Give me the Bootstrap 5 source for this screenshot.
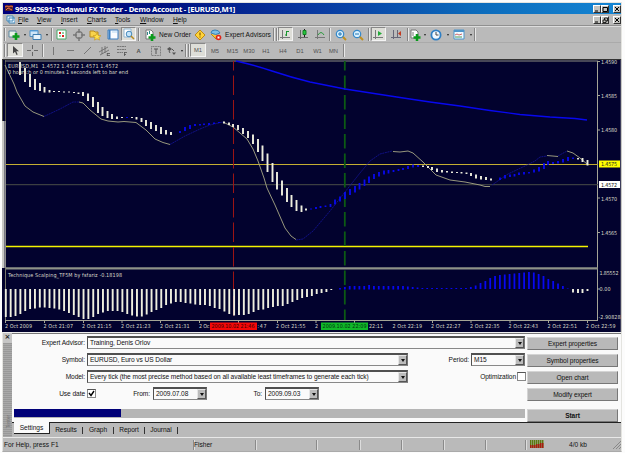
<!DOCTYPE html>
<html lang="en"><head><meta charset="utf-8"><title>Tadawul FX Trader</title>
<link href="https://cdn.jsdelivr.net/npm/bootstrap@5.3.0/dist/css/bootstrap.min.css" rel="stylesheet">
<style>
body{width:625px;height:453px;overflow:hidden;background:#fcfcfc;font:6.6px/8px "Liberation Sans",Arial,sans-serif;color:#111}
.win{width:620px;height:450px;margin:2px 0 0 2px;background:#bababa;border:1px solid #e4e4e0;border-bottom-color:#aaa}
.titlebar{height:11px;background:linear-gradient(90deg,#00007c 0,#00107f 25%,#0838a0 50%,#0b6abb 76%,#1485d3 100%);color:#fff;font-weight:bold}
.titletext{letter-spacing:-.21px;font-family:"Noto Sans",sans-serif;font-size:7.7px;margin-left:1px}
.wbtn{width:8px;height:8px;background:#c3c3bf;border:1px solid #fff;border-right-color:#333;border-bottom-color:#333}
.wbtn svg,.t svg,.titlebar svg{display:block}
.menubar{height:12px;border-bottom:1px solid #909090}
.menubar u{text-underline-offset:.5px;text-decoration-thickness:.6px}
.tb{height:16px;border-top:1px solid #ddd}
.tb.second{height:17px;border-top-color:#aaa;color:#505050;font-size:5.8px}
.t{flex:none;height:15px;display:flex;align-items:center;justify-content:center;white-space:nowrap}
.on{height:14px;background:#deded8;border:1px solid #888;border-right-color:#f4f4f4;border-bottom-color:#f4f4f4}
.w3{width:3px}.w4{width:4px}.w5{width:5px}.w6{width:6px}.w7{width:7px}.w13{width:13px}.w14{width:14px}.w15{width:15px}.w16{width:16px}.w17{width:17px}.w18{width:18px}.w20{width:20px}.w21{width:21px}.w34{width:34px}.w48{width:48px}
.m19{width:19px}.m24{width:24px}.m26{width:26px}.m28{width:28px}.m25{width:25px}.m33{width:33px}
.vsep::before{content:"";width:2px;height:13px;background:#858585;border-right:1px solid #e8e8e8}
.caret::before{content:"";border:1.7px solid transparent;border-top:2.2px solid #222;border-bottom:0}
.chart{display:block;margin-left:-1px}
.tester{height:105px;background:#bababa;border-top:1px solid #eee;letter-spacing:-.07px}
.strip{width:9px;background:repeating-linear-gradient(0deg,#a9a9a9 0 1px,#989898 1px 2px);color:#777}
.strip .x{height:10px;width:9px;background:#c5c5c5;font:bold 7px/9px "DejaVu Sans",sans-serif;color:#222;text-align:center}
.strip .v{font-size:5px;writing-mode:vertical-rl;transform:rotate(180deg);margin:72px 0 0 2px;line-height:6px;white-space:nowrap}
.pane{height:89px;background:#fafafa;border-top:1px solid #777}
.frow{height:17px}
.lab{width:73px;text-align:right;margin-right:2px}
.sel{height:13px;border:1px solid #505050;border-top-width:2px;border-right-color:#777;border-bottom-color:#888;background:#fafafa;padding-left:2px;white-space:nowrap}
.dd{width:9px;height:10px;background:#bcbcbc;border:1px solid #e6e6e6;border-right-color:#555;border-bottom-color:#555}
.dd::before{content:"";border:2.5px solid transparent;border-top:3px solid #111;border-bottom:0}
.s437{width:438px}.s321{width:321px}.s54{width:54px}
.chk{width:9px;height:9px;border:1px solid #888;border-top-color:#555;background:#fff}
.prog{height:9px;width:511px;margin:7px 0 0 2px;background:#b5b5b5}
.prog div{width:107px;height:8px;background:#000078}
.btns{width:91px;padding-top:3px;margin-right:3px}
.b{height:13px;margin-bottom:4px;background:#b9b9b9;border:1px solid #d4d4d4;border-right-color:#777;border-bottom-color:#777}
.b.start{margin-top:8px;margin-bottom:0}
.period{width:63px;text-align:right;padding-right:2px}.optim{width:109px;text-align:right;padding-right:1px}.from{width:57px;text-align:right;padding-right:3px}.to{width:58px;text-align:right;padding-right:3px}
.tabs{height:15px;border-top:1px solid #222;letter-spacing:-.04px}
.tabs .act{background:#fafafa;width:36px;height:12px;margin-top:-1px;margin-left:2px;border-right:1px solid #222;border-bottom:1px solid #222}
.bar1{width:1px;height:7px;background:#333}
.tab32,.tab30{width:32px;text-align:center}.tab30{width:30px}
.statusbar{height:14px;border-top:1px solid #e8e8e8;padding-left:1px}
.kb{margin-left:23px}
.c190{width:190px}.c63{width:62px}.c61{width:61px}.c43{width:43px}.c42{width:42px}.c40{width:40px}
.cell{height:10px;border-right:1px solid #8a8a8a;box-shadow:1px 0 #ddd}
.tx{font-family:"DejaVu Sans Condensed","DejaVu Sans",sans-serif;font-size:5.4px;font-stretch:condensed;fill:#dadaca}
</style></head><body>
<div class="win d-flex flex-column">
<div class="titlebar d-flex align-items-center">
<svg width="11" height="9" viewBox="0 0 11 9"><path d="M2 1h8v6H2z" fill="#502028"/><path d="M2 3l2-1 2 1 2-1 2 1M3 6l2-2 4 2" stroke="#f07040" fill="none"/></svg>
<span class="titletext">999342691: Tadawul FX Trader - Demo Account - [EURUSD,M1]</span>
<div class="ms-auto d-flex"><span class="wbtn"><svg width="7" height="7"><path d="M1 5h3" stroke="#000"/></svg></span><span class="wbtn me-1"><svg width="7" height="7"><path d="M1 1.500h4.500v4H1z" stroke="#000" fill="none"/></svg></span><span class="wbtn"><svg width="7" height="7"><path d="M1 1l4 4M5 1l-4 4" stroke="#000"/></svg></span></div></div>
<div class="menubar d-flex align-items-center">
<span class="t w15"><svg width="9" height="9"><path d="M1 1h6v5H1zM3 3h6v5H3z" fill="#eef8ff" stroke="#3f86b8"/></svg></span>
<span class="m19"><u>F</u>ile</span><span class="m24"><u>V</u>iew</span><span class="m26"><u>I</u>nsert</span><span class="m28"><u>C</u>harts</span><span class="m25"><u>T</u>ools</span><span class="m33"><u>W</u>indow</span><span><u>H</u>elp</span>
<div class="ms-auto d-flex"><span class="wbtn"><svg width="7" height="7"><path d="M1 5h3" stroke="#000"/></svg></span><span class="wbtn me-1"><svg width="7" height="7"><path d="M2.500 3V1h3v3H4M1 3h3v2.500H1z" stroke="#000" fill="none" stroke-width=".8"/></svg></span><span class="wbtn"><svg width="7" height="7"><path d="M1 1l4 4M5 1l-4 4" stroke="#000"/></svg></span></div></div>
<div class="tb d-flex">
<span class="t w4 vsep"></span>
<span class="t w14"><svg width="12" height="12"><path d="M1 2h7v6H1z" fill="#e9f3e9" stroke="#5d86a0"/><path d="M8 4v7M4.500 7.500h7" stroke="#0b9a1c" stroke-width="2.600"/></svg></span><span class="t w7 caret"></span>
<span class="t w15"><svg width="13" height="12"><path d="M1 1.500h8v6H1z" fill="#cfe6f8" stroke="#4d8cc0"/><path d="M4 5.500h8v5H4z" fill="#e6f3fc" stroke="#3d7cb0"/><path d="M1 2h8" stroke="#5aa4e0"/></svg></span><span class="t w7 caret"></span><span class="t w3 vsep"></span>
<span class="t w17"><svg width="11" height="11"><path d="M1 1h9v9H1z" fill="#fff" stroke="#49a868"/><path d="M3 3h2v2H3zM6 6h2v2H6z" fill="#e02020"/><path d="M6 3h2v2H6zM3 6h2v2H3z" fill="#8fd0a0"/></svg></span>
<span class="t w17"><svg width="12" height="12"><circle cx="6" cy="6" r="3.300" fill="none" stroke="#777" stroke-width="1.300"/><path d="M6 0v4M6 8v4M0 6h4M8 6h4" stroke="#777" stroke-width="1.500"/></svg></span>
<span class="t w17"><svg width="13" height="12"><path d="M1 2h4l1 1h3v5H1z" fill="#f8d34c" stroke="#b88a20"/><path d="M8 4l1.200 2.400 2.700.3-2 1.800.6 2.600L8 9.800l-2.500 1.300.6-2.600-2-1.800 2.700-.3z" fill="#ffe04a" stroke="#c89a20" stroke-width=".7"/></svg></span>
<span class="t w17"><svg width="12" height="11"><path d="M1 1h10v9H1z" fill="#fafcff" stroke="#3c7fc0"/><path d="M2.500 1v9" stroke="#3c7fc0" stroke-width="2"/><path d="M5 3h5" stroke="#b8d8f0"/></svg></span>
<span class="t on w15"><svg width="12" height="12"><path d="M1 1h7v8H1z" fill="#fff" stroke="#90b4d0"/><circle cx="6" cy="6" r="2.800" fill="#c4e4fa" stroke="#4588bb"/><path d="M8 8l3 3" stroke="#b88a20" stroke-width="1.500"/></svg></span><span class="t w5 vsep"></span>
<span class="t w17"><svg width="12" height="12"><path d="M2 1h5l2 2v7H2z" fill="#fff" stroke="#777"/><path d="M3.500 3v3M5.500 2v3" stroke="#388"/><path d="M8 5v7M4.500 8.500h7" stroke="#0b9a1c" stroke-width="2.600"/></svg></span><span class="t w34">New Order</span>
<span class="t w16"><svg width="12" height="12"><path d="M6 1l5 5-5 5-5-5z" fill="#ffd43a" stroke="#c08a10"/><path d="M6 3.500v3M6 7.500v1" stroke="#875800" stroke-width="1.200"/></svg></span>
<span class="t w16"><svg width="12" height="12"><path d="M1 5l5 5 4-4" fill="#f7c83a" stroke="#b98516"/><path d="M1 4q0-3 4-3t5 3q-4 3-9 0z" fill="#7bbfe8" stroke="#397eb3"/><circle cx="8.500" cy="8.500" r="2.800" fill="#e02418"/><path d="M7.500 7.500h2v2h-2z" fill="#fff"/></svg></span><span class="t w48">Expert Advisors</span><span class="t w3 vsep"></span><span class="t w3 vsep"></span>
<span class="t on w15"><svg width="11" height="11"><path d="M2.500 1v9M0 8.500h10" stroke="#777"/><path d="M6.500 2v5M5 6h2M6 2.500h3" stroke="#18962c"/></svg></span>
<span class="t w21"><svg width="11" height="11"><path d="M2.500 1v9M0 8.500h10" stroke="#666"/><path d="M6.500 0v8" stroke="#222"/><path d="M5 1.500h3v4H5z" fill="#26c83c" stroke="#128022"/></svg></span>
<span class="t w13"><svg width="11" height="11"><path d="M2.500 1v9M0 8.500h10" stroke="#777"/><path d="M3 6q3-5 6 0" stroke="#2a9a3c" fill="none"/></svg></span><span class="t w6 vsep"></span>
<span class="t w16"><svg width="12" height="12"><path d="M7 7l4 4" stroke="#c09020" stroke-width="2"/><circle cx="5" cy="5" r="3.700" fill="#d9f1ff" stroke="#3689ca" stroke-width="1.200"/><path d="M5 3v4M3 5h4" stroke="#2377b4"/></svg></span>
<span class="t w17"><svg width="12" height="12"><path d="M7 7l4 4" stroke="#c09020" stroke-width="2"/><circle cx="5" cy="5" r="3.700" fill="#d9f1ff" stroke="#3689ca" stroke-width="1.200"/><path d="M3 5h4" stroke="#2377b4"/></svg></span><span class="t w5 vsep"></span>
<span class="t on w15"><svg width="11" height="11"><path d="M2.500 1v9M0 8.500h10" stroke="#777"/><path d="M5 2l4 2.500L5 7z" fill="#24aa38"/></svg></span>
<span class="t w20"><svg width="11" height="11"><path d="M2.500 1v9M0 8.500h10M6.500 1v7" stroke="#667"/><path d="M10 2v5L7 4.500z" fill="#c33a20"/></svg></span><span class="t w3 vsep"></span>
<span class="t w13"><svg width="11" height="12"><path d="M1 1h5l2 2v6H1z" fill="#fff" stroke="#777"/><path d="M3 3v4" stroke="#777"/><path d="M7 5v7M3.500 8.500h7" stroke="#0b9a1c" stroke-width="2.500"/></svg></span><span class="t w5 caret"></span>
<span class="t w18"><svg width="12" height="12"><circle cx="6" cy="6" r="4.600" fill="#f0f8ff" stroke="#2f7fc4" stroke-width="1.800"/><path d="M6 3v3h2.500" stroke="#444" fill="none"/></svg></span><span class="t w5 caret"></span>
<span class="t w18"><svg width="12" height="11"><path d="M1 1h10v9H1z" fill="#f2faff" stroke="#4e95ca"/><path d="M1 2h10" stroke="#4e95ca" stroke-width="2"/><path d="M2 6l2-1 2 1 3-1" stroke="#c66" fill="none"/><path d="M2 8h7" stroke="#4a9a5a"/></svg></span><span class="t w5 caret"></span><span class="t w3 vsep"></span>
</div>
<div class="tb second d-flex">
<span class="t w4 vsep"></span>
<span class="t on w16"><svg width="10" height="11"><path d="M3 1v7.500l2-1.800L6.500 10l1.200-.6L6.300 6.300H9z" fill="#444"/></svg></span>
<span class="t w18"><svg width="11" height="11"><path d="M5.500 0v4M5.500 7v4M0 5.500h4M7 5.500h4" stroke="#666"/></svg></span><span class="t w3 vsep"></span>
<span class="t w18"><svg width="3" height="10"><path d="M1.500 1v8" stroke="#777"/></svg></span>
<span class="t w17"><svg width="9" height="9"><path d="M1 4.500h7" stroke="#777"/></svg></span>
<span class="t w16"><svg width="9" height="9"><path d="M1 8l7-7" stroke="#777"/></svg></span>
<span class="t w18"><svg width="11" height="11"><path d="M0 7l9-5M1 10l9-5M3 2v7M6 1v7" stroke="#666" stroke-width=".8"/><path d="M8 8.500h3M8 10.500h3M8.300 8v3" stroke="#555" stroke-width=".8"/></svg></span>
<span class="t w17"><svg width="11" height="11"><path d="M1 1.500h9M1 4.500h9M1 7.500h6" stroke="#777" stroke-dasharray="2 .5"/><path d="M8.500 7v4M8 7.500h3M8 9.500h2" stroke="#555" stroke-width=".8"/></svg></span>
<span class="t w17 fw-bold">A</span>
<span class="t w17"><svg width="10" height="10"><path d="M.5.500h9v9h-9z" fill="none" stroke="#777" stroke-dasharray="1 .6"/><path d="M3 3h4M5 3v5" stroke="#555"/></svg></span>
<span class="t w15"><svg width="11" height="10"><path d="M1 3l2.500-2L6 3 3.500 5zM6 6.500h4L8 9z" fill="#555"/><path d="M3 5l1 2M6 3l2 2" stroke="#555"/></svg></span><span class="t w5 caret"></span><span class="t w3 vsep"></span><span class="t w3 vsep"></span>
<span class="t on w16">M1</span><span class="t w18">M5</span><span class="t w17">M15</span><span class="t w16">M30</span><span class="t w18">H1</span><span class="t w16">H4</span><span class="t w18">D1</span><span class="t w17">W1</span><span class="t w15">MN</span><span class="t w5 vsep"></span>
</div>
<svg class="chart flex-shrink-0" width="620" height="273" viewBox="2 59 620 273">
<path fill="#02022e" d="M2 59h619v273H2z"/><path fill="#c8c8c4" d="M620.700 59h2v273h-2zM2 121h2.500v147H2z"/><path fill="#8c8c8c" d="M4.500 121H6v147H4.500z"/><path fill="#4c4c40" d="M2 59h1v62H2zM5 59h1v62H5z"/>
<path d="M2 59.500h619" stroke="#333"/><path d="M5 61h593" stroke="#8b8b80"/><path d="M597.500 61v260M5 320.500h593" stroke="#a5a596"/><path d="M5 268.300h593" stroke="#8e9288" stroke-width="2.200"/><path d="M5.500 268v52" stroke="#77776a"/>
<path d="M598 95.500h2m-2 34.500h2m-2 68h2m-2 34.500h2m-2-171h2M598 289h2M5.500 320v3M44.500 320v3M83.500 320v3M122 320v3M160.500 320v3M199.500 320v3M238.500 320v3M277.500 320v3M316 320v3M354.500 320v3M432.500 320v3M471 320v3M510 320v3M548.500 320v3M587.500 320v3" stroke="#a5a596"/>
<path d="M6 164.500h592" stroke="#c4ae32"/><path d="M6 184.700h592" stroke="#4a4e48"/><path d="M6 246.400h582" stroke="#f4f400" stroke-width="1.500"/>
<path d="M233.500 61V320" stroke="#9c1414" stroke-dasharray="19.500 5" stroke-dashoffset="10"/><path d="M344.800 61V320" stroke="#0c5a14" stroke-width="1.800" stroke-dasharray="14.500 5" stroke-dashoffset="5"/>
<path fill="none" stroke="#0808ee" stroke-width="1.400" d="M236 61Q254 65 272 71T310 82Q330 86 345 89L400 97.500 430 102 460 106 490 110.500 520 114.500 550 117 575 118.500 587 120"/>
<g fill="none" stroke="#a8a886" stroke-width=".9"><path d="M5 65l9 19 3 8 8 14 8 6 11 4.500M79 102l4 1 7 7 11 9 7 2 10 1 6-.5 12 1 10 7.500 9 9 8 3.500 7 2M223 122l10 5 14 12 6 10 5 12 6 17 3 10 8 17 10 23 6 8 5 3.500M393 151.500l7 .5 8-1 5 2 10 9 13 13 14 5 15 2 15 3 5 1.500h5M547 155.500l11 1M567 151l6 2 7 5 7 6"/></g>
<g fill="none" stroke="#141498" stroke-width=".8" stroke-dasharray="2 .6"><path d="M44 116.500l16-7.500 13-7 6 0M170 144.500l15-8.500 15-7 10-4 13-3M296 240l7-1 10-8 17-20 15-19 15-19 10-12 10-7 12-3M492 185l16-11 17-8 10-5 5-4 7-1M558 156l9-5"/></g>
<g id="plots"></g>
<g class="tx">
<text x="8" y="67.500" textLength="110">EURUSD,M1&#160; 1.4572 1.4572 1.4571 1.4572</text><text x="8" y="74.200" textLength="120">0 hours:h or 0 minutes 1 seconds left to bar end</text>
<text x="8" y="277" textLength="114">Technique Scalping_TF5M by fsfariz -0.18198</text>
<g id="times"></g>
<text x="601" y="64" textLength="16">1.4590</text><text x="601" y="97.700" textLength="16">1.4585</text><text x="601" y="132.100" textLength="16">1.4580</text><text x="601" y="200.700" textLength="16">1.4570</text><text x="601" y="234.700" textLength="16">1.4565</text>
<path fill="#ffff00" d="M599 160.500h21v7h-21z"/><text x="601" y="166" textLength="16" fill="#222">1.4575</text><path fill="#fff" d="M599 181h21v7h-21z"/><text x="601" y="186.500" textLength="16" fill="#111">1.4572</text>
<text x="599.500" y="275" textLength="19">1.85552</text><text x="599.500" y="291" textLength="11">0.00</text><text x="598.500" y="318.700" textLength="22">-2.90828</text>
<path fill="#f40808" d="M210 322.500h47v7.500h-47z"/><text x="211.500" y="328.300" textLength="43" fill="#300">2009.10.02 21:46</text>
<path fill="#10b828" d="M321 322.500h47v7.500h-47z"/><text x="322.500" y="328.300" textLength="44" fill="#031">2009.10.02 22:09</text>
</g></svg>
<div class="tester d-flex flex-shrink-0">
<div class="strip"><div class="x">×</div><div class="v">Tester</div></div>
<div class="flex-grow-1">
<div class="pane d-flex">
<div class="flex-grow-1">
<div class="frow d-flex align-items-center"><span class="lab">Expert Advisor:</span><div class="sel s437 d-flex justify-content-between align-items-center"><span>Training, Denis Orlov</span><span class="dd d-flex align-items-center justify-content-center"></span></div></div>
<div class="frow d-flex align-items-center"><span class="lab">Symbol:</span><div class="sel s321 d-flex justify-content-between align-items-center"><span>EURUSD, Euro vs US Dollar</span><span class="dd d-flex align-items-center justify-content-center"></span></div><span class="period">Period:</span><div class="sel s54 d-flex justify-content-between align-items-center"><span>M15</span><span class="dd d-flex align-items-center justify-content-center"></span></div></div>
<div class="frow d-flex align-items-center"><span class="lab">Model:</span><div class="sel s321 d-flex justify-content-between align-items-center"><span>Every tick (the most precise method based on all available least timeframes to generate each tick)</span><span class="dd d-flex align-items-center justify-content-center"></span></div><span class="optim">Optimization</span><span class="chk"></span></div>
<div class="frow d-flex align-items-center"><span class="lab">Use date</span><span class="chk d-flex"><svg width="7" height="7"><path d="M1 3l2 2.500L6 1" stroke="#000" stroke-width="1.400" fill="none"/></svg></span><span class="from">From:</span><div class="sel s54 d-flex justify-content-between align-items-center"><span>2009.07.08</span><span class="dd d-flex align-items-center justify-content-center"></span></div><span class="to">To:</span><div class="sel s54 d-flex justify-content-between align-items-center"><span>2009.09.03</span><span class="dd d-flex align-items-center justify-content-center"></span></div></div>
<div class="prog"><div></div></div>
</div>
<div class="btns text-center"><div class="b d-flex align-items-center justify-content-center">Expert properties</div><div class="b d-flex align-items-center justify-content-center">Symbol properties</div><div class="b d-flex align-items-center justify-content-center">Open chart</div><div class="b d-flex align-items-center justify-content-center">Modify expert</div><div class="b start fw-bold d-flex align-items-center justify-content-center">Start</div></div>
</div>
<div class="tabs d-flex align-items-center"><span class="act align-self-start d-flex align-items-center justify-content-center">Settings</span><span class="tab32">Results</span><i class="bar1"></i><span class="tab30">Graph</span><i class="bar1"></i><span class="tab30">Report</span><i class="bar1"></i><span class="tab32">Journal</span><i class="bar1"></i></div>
</div></div>
<div class="statusbar d-flex align-items-center"><span class="cell c190 d-flex align-items-center">For Help, press F1</span><span class="cell c63 d-flex align-items-center">Fisher</span><span class="cell c61"></span><span class="cell c43"></span><span class="cell c42"></span><span class="cell c42"></span><span class="cell c42"></span><span class="cell c40"></span>
<svg width="16" height="9" class="ms-1"><path d="M.7 0v8M2.700 0v8M4.700 0v8M6.700 0v8M8.700 0v8M10.700 0v8M12.700 0v8" stroke="#5b7a10" stroke-width="1.500"/><path d="M.7 5v3M2.700 5v3M4.700 5v3M6.700 4v4M8.700 4v4M10.700 3v5M12.700 3v5" stroke="#a81c10" stroke-width="1.500"/></svg><span class="kb">4/0 kb</span><svg width="8" height="9" class="ms-auto"><path d="M0 9l8-8M3 9l5-5M6 9l2-2" stroke="#888"/></svg></div>
</div>
<script>
const NS="http://www.w3.org/2000/svg";
// candles: x, top, bottom
const white=[[20,62,75],[25,68,82],[30,74,87],[35,79,90],[40,83,91],[44.500,87,92.500],[49.500,90,92.500],[54,91,92],[59,91,92],[64,91.500,92.500],[69,91.500,92.500],[74,92,93],[78.500,92.500,94],[83,92,96],[88,93.500,101],[93,97,107],[98,102,113],[102.500,107,116],[107.500,111,118],[112,114,119],[117,116.500,119],[122,117,118],[132,117,118],[136.500,117,119.500],[141.500,118,122],[146,120,126],[151,122,129],[156,125,131],[161,127,134],[166,130,134.500],[171,132,135],[224,121.500,123.500],[229,122.500,125],[233,124,127],[238,125,130],[243,128,134],[248,131,138],[253,134.500,144],[258,139,152],[262.500,145.500,161],[267.500,153.500,172],[272.500,163,182],[277,172,189.500],[282,180.500,195.500],[287,188,202],[291.500,195,207],[296.500,200,211],[301.500,205.500,212],[306,208.500,210.500],[423,165.500,167],[428,166,168],[432,167,170],[437,168.500,172],[442,170,172.500],[447,171,172.500],[452,171.500,173],[457,172,173],[461.500,172,173.500],[466.500,172.500,174],[471,173,176],[476,174.500,178.500],[481,176,179.500],[486,177,180],[491,178.500,180.500],[578,158,159.500],[582.500,158,162],[587.500,160,165.500]];
const blue=[[127,117,118],[180,131,133],[185,127,131],[190,125,129],[195,124,126],[200,124,125.500],[204,123.500,125],[209,123,125],[214,122.500,124],[219,122,123],[311,208.500,209.500],[316,207,209],[320.500,206,208],[325.500,205.500,207],[330.500,204,207],[335,199.500,204.500],[340,196.500,201.500],[345,192,199],[350,189,195],[355,186,192.500],[359.500,183,189.500],[364.500,179.500,186],[369,176.500,183],[374,174,179],[379,172,176.500],[384,170.500,174.500],[388.500,170,173.500],[393.500,170,172],[398.500,169,171],[403,168,170],[408,166,169],[413,164.500,167.500],[418,165,167],[500,177.500,180],[505,175,178.500],[510,174.500,177],[514.500,174,176.500],[519,172.500,175],[524,172,174.500],[529,172,173.500],[534,169.500,172.500],[539,167,171.500],[544,163,169],[548,161,165],[553,162,164],[558,161,163.500],[563,159,162.500],[568,157,161],[573,157.500,159]];
// oscillator: lower ends of bars below zero, then upper ends above zero
const low=[317,317,316,314,311,309,308.500,307.500,307.500,308,308.500,309.500,311,313,315,317,319,319,317,314,312.500,311,311,311,312,314,315.500,316.500,316.500,314.500,312,310,308,305,303.500,302,302,303,303.500,304.500,305,305,306,308,309,311.500,314,315.500,315,315,314,312,310,309.500,308,307,306,306,304,302,300,298,297,296,294,293,292,290];
const high=[288,287,286,286,286,286,285,286,286,286,286,286,286,286,286.500,287,287.500,288,288,288,288,288,288,288,288,288,288,287,285.500,283,281,278,276,275,274.500,274,273.500,273,272.500,272,272.500,274,276,279,281,283.500,286,288.500];
low.forEach((b,i)=>white.push([5.800+i*4.858,289,b]));
high.forEach((t,i)=>blue.push([340+i*4.845,t,i<15?289.500:289]));
white.push([573,289,292.500],[578,289,293],[582.500,289,293],[587.500,289,291]);
for(const [list,c,w] of [[blue,"#0808f0",1.8],[white,"#efefdf",1.9]]){
 const p=document.createElementNS(NS,"path");
 p.setAttribute("d",list.map(([x,a,b])=>`M${x} ${a}V${b}`).join(""));
 p.setAttribute("stroke",c);p.setAttribute("stroke-width",w);
 document.getElementById("plots").append(p);
}
[[5,"2 Oct 2009",27],[43.500,"2 Oct 21:07"],[82,"2 Oct 21:15"],[121,"2 Oct 21:23"],[160,"2 Oct 21:31"],[199,"2 Oc",10.5],[257.500,":47",9],[276,"2 Oct 21:55"],[315,"2",3],[369,"22:11",14],[392.500,"2 Oct 22:19"],[431,"2 Oct 22:27"],[470,"2 Oct 22:35"],[508.500,"2 Oct 22:43"],[547.500,"2 Oct 22:51"],[586,"2 Oct 22:59"]].forEach(([x,s,w=29.500])=>{
 const t=document.createElementNS(NS,"text");
 t.setAttribute("x",x);t.setAttribute("y",328.300);t.setAttribute("textLength",w);t.textContent=s;
 document.getElementById("times").append(t);
});
</script>
<script src="https://cdn.jsdelivr.net/npm/bootstrap@5.3.0/dist/js/bootstrap.bundle.min.js"></script>
</body></html>
